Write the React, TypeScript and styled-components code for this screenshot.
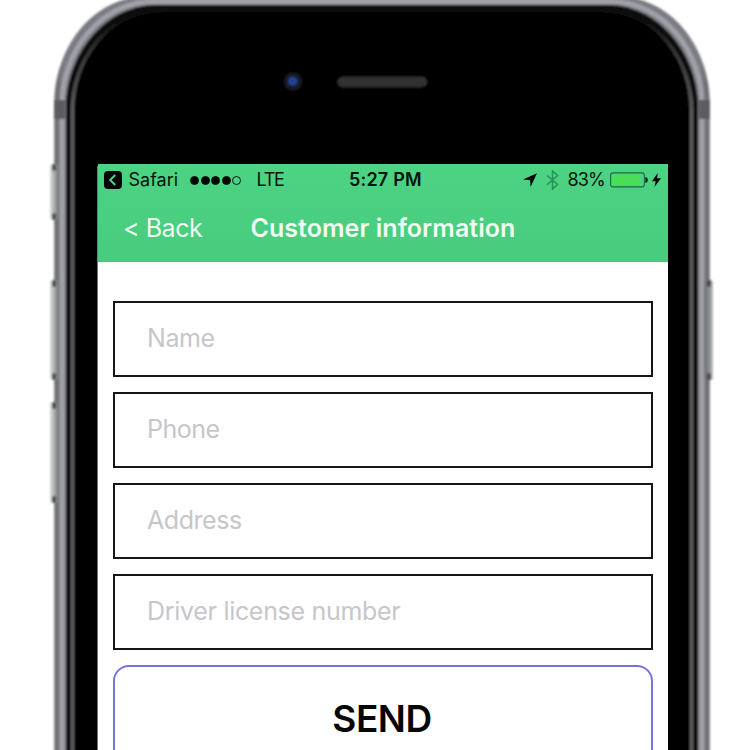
import React from "react";
import styled, { createGlobalStyle } from "styled-components";

const GlobalStyle = createGlobalStyle`
  * { box-sizing: border-box; }
  body { margin: 0; background: #fff; overflow: hidden; }
`;

const Stage = styled.main`
  display: grid;
  width: 750px;
  height: 750px;
  overflow: hidden;
  background: #fff;
  font-family: Inter, "Liberation Sans", sans-serif;
`;

const DeviceArt = styled.svg`
  grid-area: 1 / 1;
  display: block;
`;

const Screen = styled.section`
  grid-area: 1 / 1;
  z-index: 1;
  display: flex;
  flex-direction: column;
  width: 570px;
  height: 586px;
  margin: 164px 0 0 98px;
  overflow: hidden;
  background: #fff;
`;

const Header = styled.header`
  flex: none;
  height: 98px;
  background: linear-gradient(#4dd384, #48cb7d);
  border-bottom: 1px solid #59bd81;
`;

const StatusBar = styled.div`
  display: grid;
  grid-template-columns: 251px 74px 1fr;
  align-items: center;
  height: 32px;
  color: #04140b;
`;

const StatusGroup = styled.div<{ $end?: boolean }>`
  display: flex;
  align-items: center;
  padding: ${(p) => (p.$end ? "0 7px 0 0" : "0 0 0 6px")};
  justify-content: ${(p) => (p.$end ? "flex-end" : "flex-start")};
`;

const StatusText = styled.span<{ $spacing?: number; $left?: number; $weight?: number }>`
  font-size: 18px;
  line-height: 24px;
  white-space: nowrap;
  font-weight: ${(p) => p.$weight ?? 400};
  letter-spacing: ${(p) => p.$spacing ?? 0}px;
  margin-left: ${(p) => p.$left ?? 0}px;
`;

const Signal = styled.div`
  display: flex;
  gap: 1.6px;
  margin-left: 12px;
`;

const Dot = styled.i<{ $empty?: boolean }>`
  width: 9px;
  height: 9px;
  border-radius: 50%;
  border: 1px solid #08170e;
  background: ${(p) => (p.$empty ? "transparent" : "#020503")};
`;

const Icon = styled.svg<{ $left?: number }>`
  display: block;
  flex: none;
  margin-left: ${(p) => p.$left ?? 0}px;
`;

const NavBar = styled.nav`
  display: flex;
  align-items: center;
  height: 63px;
  color: #f0fbf4;
`;

const BackLink = styled.span`
  width: 127.5px;
  margin-left: 25px;
  font-size: 25px;
  line-height: 32px;
  letter-spacing: -0.45px;
  white-space: nowrap;
`;

const Title = styled.h1`
  margin: 0;
  font-size: 25px;
  line-height: 32px;
  font-weight: 600;
  letter-spacing: 0.05px;
  white-space: nowrap;
`;

const Form = styled.div`
  display: flex;
  flex-direction: column;
  gap: 15px;
  padding: 39px 15px 0;
`;

const Field = styled.div`
  display: flex;
  align-items: center;
  flex: none;
  height: 76px;
  padding: 0 32px 3px;
  border: 2px solid #161616;
  color: #c6c6cb;
  font-size: 25px;
  line-height: 32px;
`;

const FieldText = styled.span<{ $spacing: number }>`
  letter-spacing: ${(p) => p.$spacing}px;
  white-space: nowrap;
`;

const SendButton = styled.div`
  display: flex;
  flex: none;
  align-items: center;
  justify-content: center;
  height: 108px;
  padding: 0 2px 2px 0;
  border: 2px solid #7774d8;
  border-radius: 16px;
  color: #060606;
  font-size: 37px;
  font-weight: 600;
  letter-spacing: -0.5px;
`;

function BodyShape() {
  return (
    <>
      <path
        d="M54 760V105C54 50 90-4 150-4H614C674-4 710 50 710 105V760Z"
        fill="url(#rim)"
      />
      <path
        d="M62 760V105C62 53 99 1.500 154 1.500H610C665 1.500 702 53 702 105V760"
        fill="none"
        stroke="#a0a1a9"
        strokeWidth="5"
      />
      <path d="M66 760V107C66 58 102 5 157 5H607C662 5 698 58 698 107V760Z" fill="#0b0c0d" />
      <path
        d="M72.500 760V110C72.500 62 106 12 160 11H604C658 12 691.500 62 691.500 110V760"
        fill="#000"
        stroke="url(#glass)"
        strokeWidth="3.600"
      />
    </>
  );
}

function SideButton({ x, y, height, right }: { x: number; y: number; height: number; right?: boolean }) {
  return (
    <g>
      <rect x={x} y={y} width="9" height={height} rx="2" fill={right ? "url(#buttonRight)" : "url(#buttonLeft)"} />
      <rect x={right ? x + 3 : x + 2} y={y} width="4" height="7" rx="2" fill="#36373a" opacity=".85" />
      <rect x={right ? x + 3 : x + 2} y={y + height - 7} width="4" height="7" rx="2" fill="#36373a" opacity=".85" />
    </g>
  );
}

function Device() {
  return (
    <DeviceArt width="750" height="750" viewBox="0 0 750 750" aria-hidden="true">
      <defs>
        <linearGradient id="rim" x1="54" x2="710" y1="0" y2="0" gradientUnits="userSpaceOnUse">
          <stop offset="0" stopColor="#8b8d91" />
          <stop offset=".004" stopColor="#6a6c71" />
          <stop offset=".012" stopColor="#7a7b82" />
          <stop offset=".988" stopColor="#7a7b82" />
          <stop offset=".996" stopColor="#6a6c71" />
          <stop offset="1" stopColor="#8b8d91" />
        </linearGradient>
        <linearGradient id="glass" x1="0" x2="0" y1="8" y2="110" gradientUnits="userSpaceOnUse">
          <stop offset="0" stopColor="#050505" />
          <stop offset=".15" stopColor="#111" />
          <stop offset=".4" stopColor="#333" />
          <stop offset="1" stopColor="#5c5c5c" />
        </linearGradient>
        <linearGradient id="buttonLeft">
          <stop offset="0" stopColor="#dcdddf" />
          <stop offset=".5" stopColor="#a9abae" />
          <stop offset="1" stopColor="#686a70" />
        </linearGradient>
        <linearGradient id="buttonRight">
          <stop offset="0" stopColor="#686a70" />
          <stop offset=".65" stopColor="#909198" />
          <stop offset="1" stopColor="#c5c6c9" />
        </linearGradient>
        <radialGradient id="lens">
          <stop offset="0" stopColor="#1c3a8e" />
          <stop offset=".3" stopColor="#1d3479" />
          <stop offset=".5" stopColor="#171c38" />
          <stop offset=".7" stopColor="#1b1b1e" />
          <stop offset="1" stopColor="#000" />
        </radialGradient>
        <filter id="soft" x="-5%" y="-5%" width="110%" height="110%">
          <feGaussianBlur stdDeviation=".9" />
        </filter>
      </defs>
      <g filter="url(#soft)">
        <BodyShape />
        <rect x="54" y="100" width="11" height="19" fill="#5a5b60" />
        <rect x="699" y="100" width="11" height="19" fill="#5a5b60" />
        <SideButton x={50} y={164} height={56} />
        <SideButton x={50} y={280} height={100} />
        <SideButton x={50} y={402} height={101} />
        <SideButton x={704} y={280} height={100} right />
        <circle cx="293" cy="81.500" r="10.500" fill="url(#lens)" />
        <circle cx="292.500" cy="81" r="3" fill="none" stroke="#2b4fa6" strokeWidth="1.700" />
        <rect x="337.500" y="77" width="89.500" height="10" rx="5" fill="#333" />
      </g>
      <path d="M97.500 166V750" stroke="#777" />
    </DeviceArt>
  );
}

const FIELDS = [
  { label: "Name", spacing: -0.45 },
  { label: "Phone", spacing: -0.5 },
  { label: "Address", spacing: -0.45 },
  { label: "Driver license number", spacing: -0.3 },
];

function StatusRow() {
  return (
    <StatusBar>
      <StatusGroup>
        <Icon width="18" height="18" viewBox="0 0 18 18">
          <rect width="18" height="18" rx="4" fill="#020503" />
          <path d="M11.300 4 6.200 9 11.300 14" fill="none" stroke="#4fd085" strokeWidth="2" />
        </Icon>
        <StatusText $left={6.5}>Safari</StatusText>
        <Signal>
          <Dot /><Dot /><Dot /><Dot /><Dot $empty />
        </Signal>
        <StatusText $left={15} $spacing={-1.2}>LTE</StatusText>
      </StatusGroup>
      <StatusText $weight={600} $spacing={0.2}>5:27 PM</StatusText>
      <StatusGroup $end>
        <Icon width="14" height="14" viewBox="0 0 14 14">
          <path d="M14 .3 7.500 14 7.200 7.200 0 6.600Z" fill="#010402" />
        </Icon>
        <Icon $left={8.5} width="13" height="20" viewBox="0 0 13 20">
          <path d="M1 5.500 11.600 14.500 6.500 19V1L11.600 5.500 1 14.700" fill="none" stroke="#289258" strokeWidth="1.500" />
        </Icon>
        <StatusText $left={8.5} $spacing={-0.8}>83%</StatusText>
        <Icon $left={5} width="38" height="16" viewBox="0 0 38 16">
          <rect x=".6" y=".9" width="33.800" height="14" rx="2.500" fill="none" stroke="#206a3f" strokeWidth="1.100" />
          <rect x="2" y="2.300" width="27.500" height="11.200" rx="1" fill="#4bdc58" />
          <path d="M35.300 5Q37.900 5.500 37.900 8T35.300 11Z" fill="#07170d" />
        </Icon>
        <Icon $left={4} width="9" height="14" viewBox="0 0 9 14">
          <path d="M5.700 0 0 8.300H3.700L2.400 14 9 5.200H5Z" fill="#010402" />
        </Icon>
      </StatusGroup>
    </StatusBar>
  );
}

export default function App() {
  return (
    <>
      <GlobalStyle />
      <Stage>
        <Device />
        <Screen>
          <Header>
            <StatusRow />
            <NavBar>
              <BackLink>&lt; Back</BackLink>
              <Title>Customer information</Title>
            </NavBar>
          </Header>
          <Form>
            {FIELDS.map((f) => (
              <Field key={f.label}>
                <FieldText $spacing={f.spacing}>{f.label}</FieldText>
              </Field>
            ))}
            <SendButton>SEND</SendButton>
          </Form>
        </Screen>
      </Stage>
    </>
  );
}
